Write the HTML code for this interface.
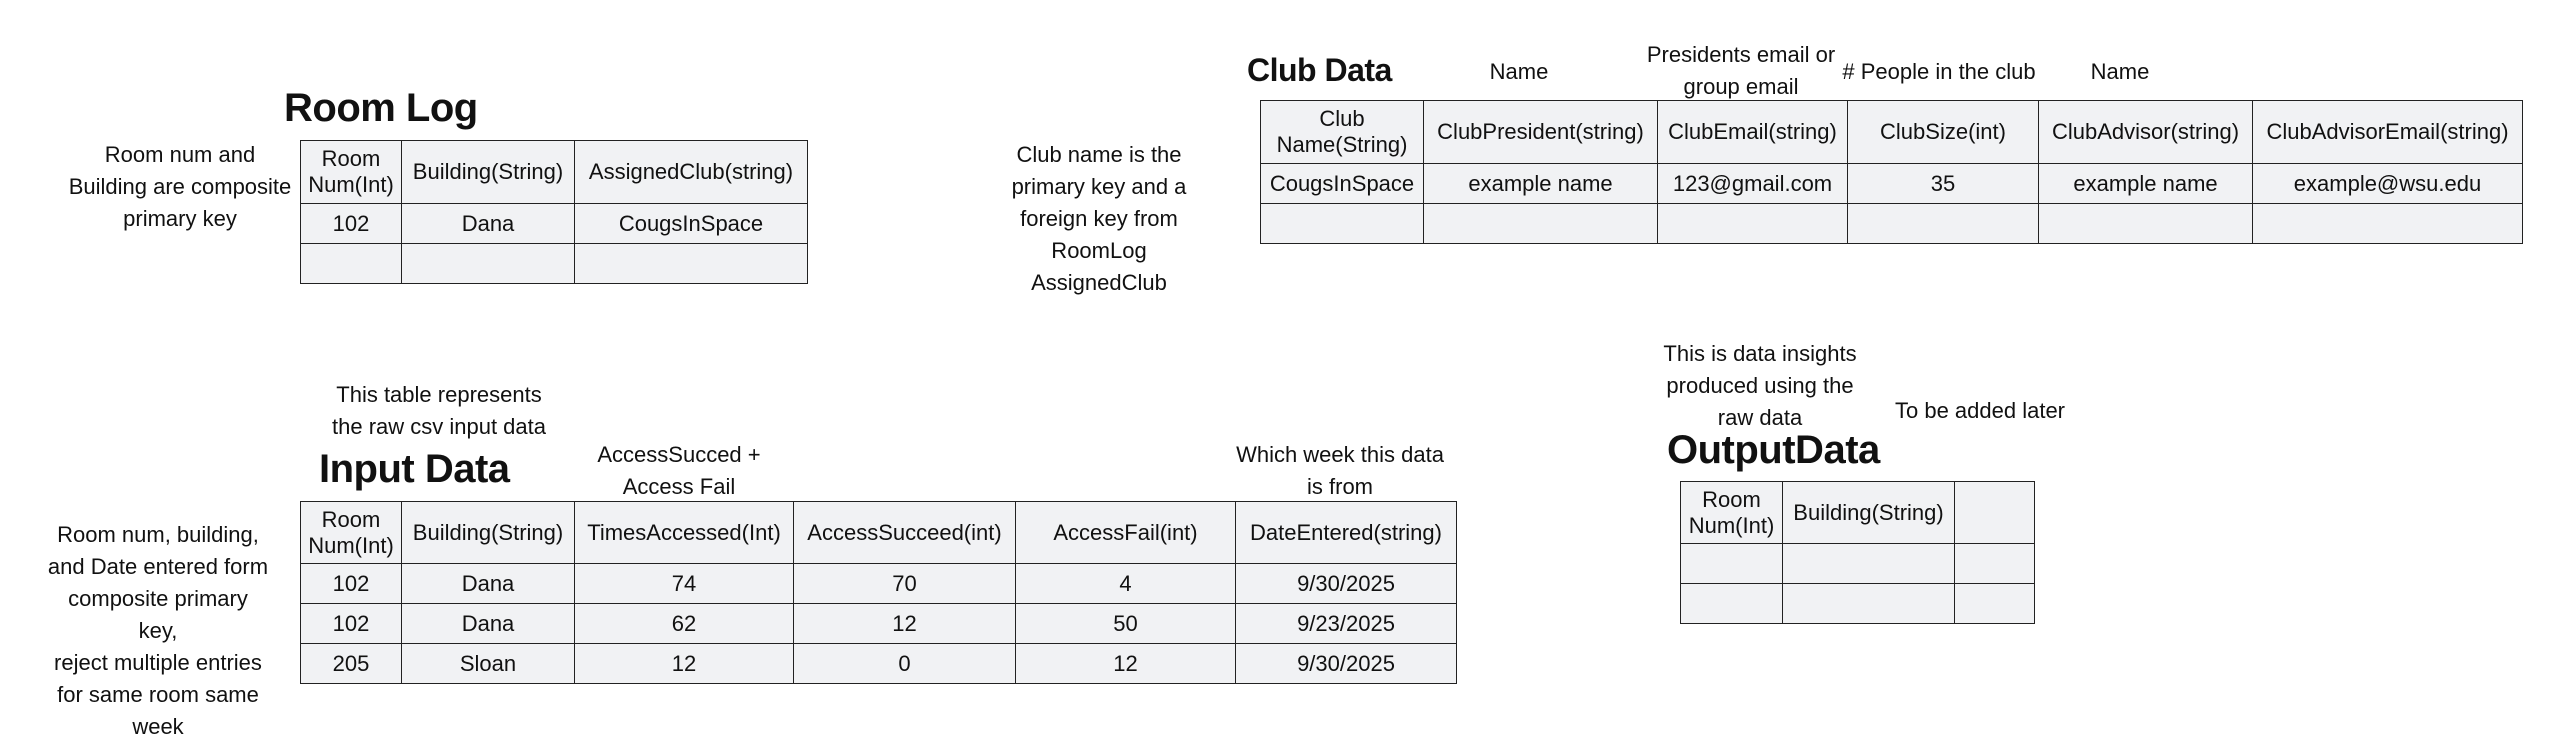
<!DOCTYPE html>
<html><head><meta charset="utf-8"><style>
body{margin:0;width:2560px;height:724px;background:#fff;position:relative;overflow:hidden;font-family:"Liberation Sans",sans-serif;color:#111}
.t{position:absolute;text-align:center;font-size:22px;line-height:32px;white-space:nowrap;transform:translateX(-50%)}
.h{position:absolute;font-weight:bold;white-space:nowrap;letter-spacing:-0.5px}
table{position:absolute;border-collapse:collapse;table-layout:fixed}
td{border:1.5px solid #222;background:#f1f2f4;text-align:center;font-size:22px;line-height:26px;padding:0;overflow:hidden;white-space:nowrap}
</style></head><body>

<div class="h" style="left:284px;top:86px;font-size:40px">Room Log</div>
<div class="t" style="left:180px;top:139px">Room num and<br>Building are composite<br>primary key</div>
<table style="left:300px;top:140px;width:507px">
<col style="width:101px"><col style="width:173px"><col style="width:233px">
<tr style="height:63px"><td style="white-space:normal">Room<br>Num(Int)</td><td>Building(String)</td><td>AssignedClub(string)</td></tr>
<tr style="height:40px"><td>102</td><td>Dana</td><td>CougsInSpace</td></tr>
<tr style="height:40px"><td></td><td></td><td></td></tr>
</table>

<div class="t" style="left:1099px;top:139px">Club name is the<br>primary key and a<br>foreign key from<br>RoomLog<br>AssignedClub</div>

<div class="h" style="left:1247px;top:52px;font-size:32px">Club Data</div>
<div class="t" style="left:1519px;top:56px">Name</div>
<div class="t" style="left:1741px;top:39px">Presidents email or<br>group email</div>
<div class="t" style="left:1939px;top:56px"># People in the club</div>
<div class="t" style="left:2120px;top:56px">Name</div>
<table style="left:1260px;top:100px;width:1262px">
<col style="width:163px"><col style="width:234px"><col style="width:190px"><col style="width:191px"><col style="width:214px"><col style="width:270px">
<tr style="height:63px"><td>Club<br>Name(String)</td><td>ClubPresident(string)</td><td>ClubEmail(string)</td><td>ClubSize(int)</td><td>ClubAdvisor(string)</td><td>ClubAdvisorEmail(string)</td></tr>
<tr style="height:40px"><td>CougsInSpace</td><td>example name</td><td>123@gmail.com</td><td>35</td><td>example name</td><td>example@wsu.edu</td></tr>
<tr style="height:40px"><td></td><td></td><td></td><td></td><td></td><td></td></tr>
</table>

<div class="t" style="left:439px;top:379px">This table represents<br>the raw csv input data</div>
<div class="h" style="left:319px;top:447px;font-size:40px">Input Data</div>
<div class="t" style="left:679px;top:439px">AccessSucced +<br>Access Fail</div>
<div class="t" style="left:1340px;top:439px">Which week this data<br>is from</div>
<div class="t" style="left:158px;top:519px">Room num, building,<br>and Date entered form<br>composite primary<br>key,<br>reject multiple entries<br>for same room same<br>week</div>
<table style="left:300px;top:501px;width:1156px">
<col style="width:101px"><col style="width:173px"><col style="width:219px"><col style="width:222px"><col style="width:220px"><col style="width:221px">
<tr style="height:62px"><td>Room<br>Num(Int)</td><td>Building(String)</td><td>TimesAccessed(Int)</td><td>AccessSucceed(int)</td><td>AccessFail(int)</td><td>DateEntered(string)</td></tr>
<tr style="height:40px"><td>102</td><td>Dana</td><td>74</td><td>70</td><td>4</td><td>9/30/2025</td></tr>
<tr style="height:40px"><td>102</td><td>Dana</td><td>62</td><td>12</td><td>50</td><td>9/23/2025</td></tr>
<tr style="height:40px"><td>205</td><td>Sloan</td><td>12</td><td>0</td><td>12</td><td>9/30/2025</td></tr>
</table>

<div class="t" style="left:1760px;top:338px">This is data insights<br>produced using the<br>raw data</div>
<div class="t" style="left:1980px;top:395px">To be added later</div>
<div class="h" style="left:1667px;top:428px;font-size:40px">OutputData</div>
<table style="left:1680px;top:481px;width:354px">
<col style="width:102px"><col style="width:172px"><col style="width:80px">
<tr style="height:62px"><td>Room<br>Num(Int)</td><td>Building(String)</td><td></td></tr>
<tr style="height:40px"><td></td><td></td><td></td></tr>
<tr style="height:40px"><td></td><td></td><td></td></tr>
</table>
</body></html>
